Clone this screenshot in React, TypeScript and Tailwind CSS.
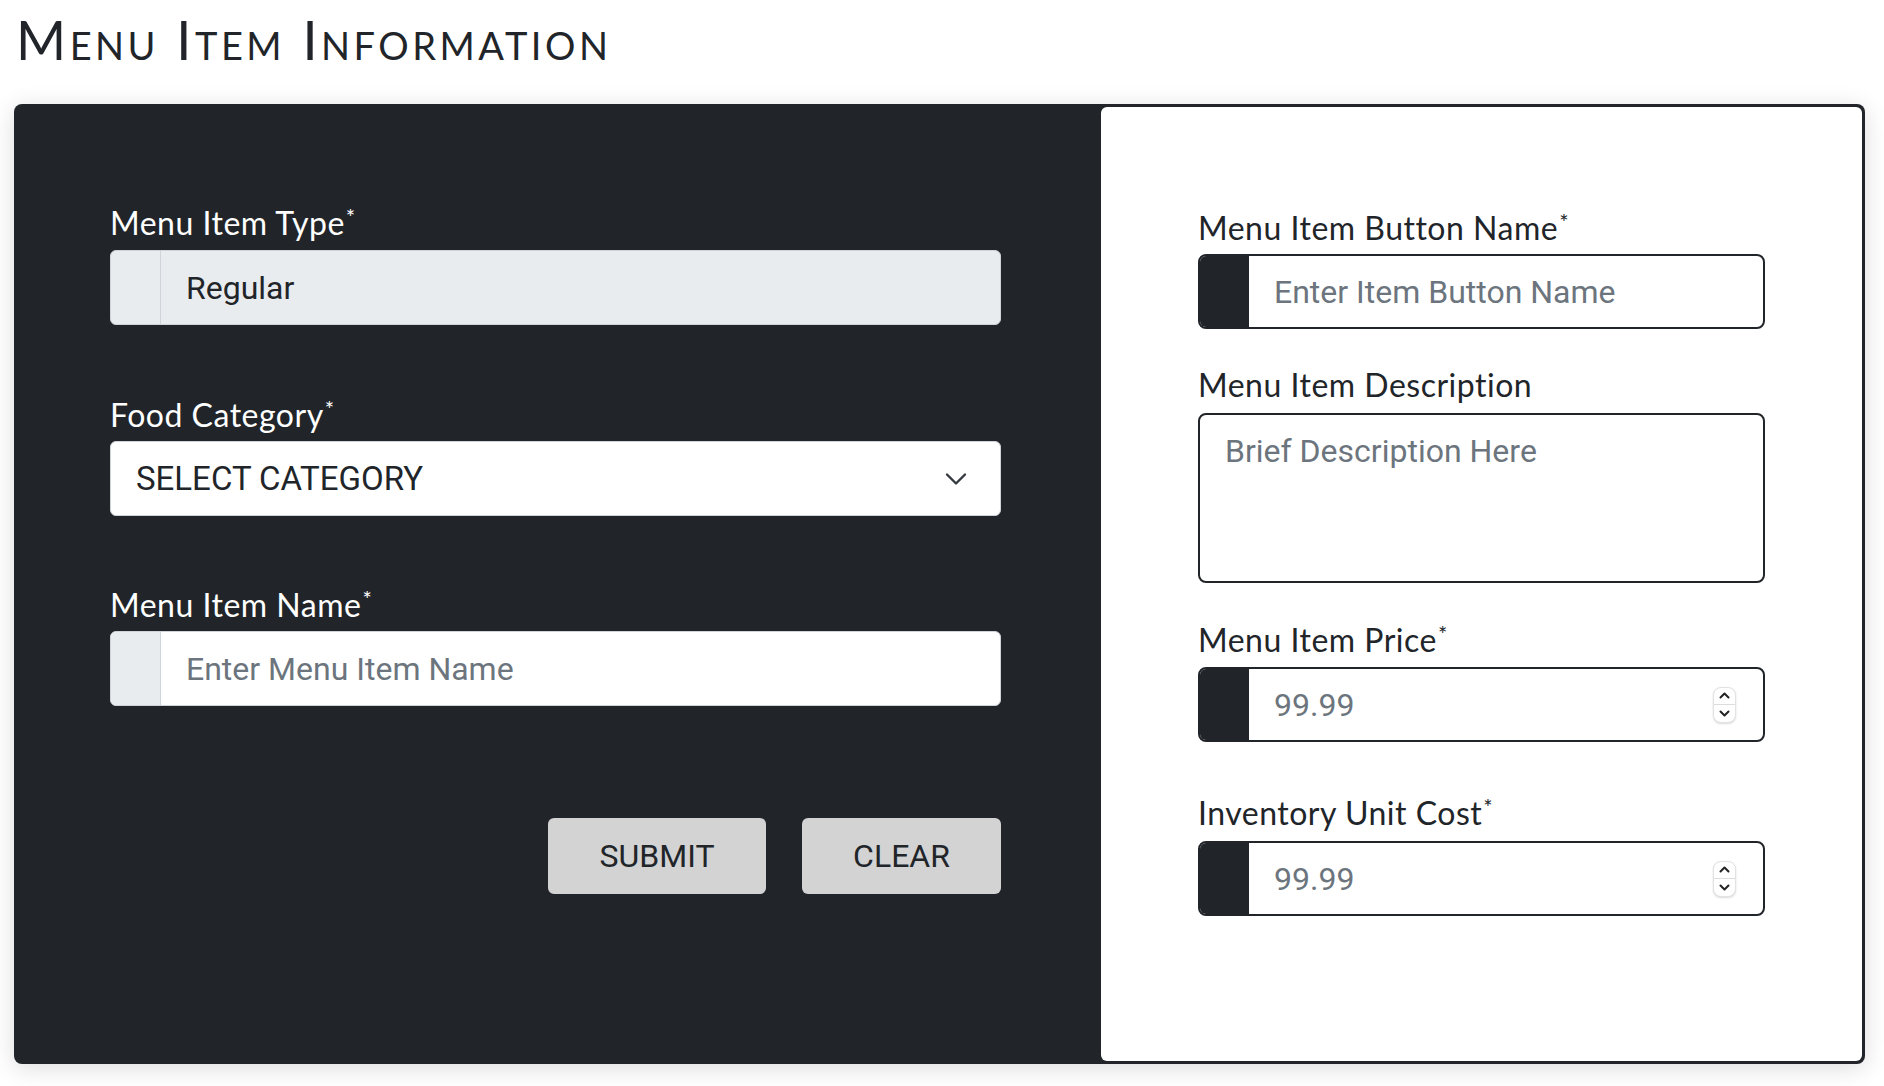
import { useState } from 'react';

const labelDark = "block text-[32px] leading-[36px] tracking-[0.5px] text-white font-['Lato',sans-serif]";
const labelLight = "block text-[32px] leading-[36px] tracking-[0.5px] text-[#212529] font-['Lato',sans-serif]";
const fieldText = "font-['Roboto',sans-serif] text-[32px] text-[#212529] placeholder:text-[#6c757d] outline-none bg-transparent";

function Req() {
  return <span className="align-top text-[22px] leading-[20px] relative top-[2px] ml-[1px]">*</span>;
}

function Spinner() {
  return (
    <div className="flex flex-col w-[23px] h-[36px] mr-[27px] rounded-[8px] border border-[#e2e2e2] bg-white shadow-[0_1px_2px_rgba(0,0,0,0.15)] overflow-hidden shrink-0">
      <div className="flex-1 flex items-center justify-center border-b border-[#dddddd]">
        <svg width="11" height="7" viewBox="0 0 11 7">
          <path d="M1.5 5.5 5.5 1.5 9.5 5.5" fill="none" stroke="#222" strokeWidth="2" strokeLinecap="round" strokeLinejoin="round" />
        </svg>
      </div>
      <div className="flex-1 flex items-center justify-center">
        <svg width="11" height="7" viewBox="0 0 11 7">
          <path d="M1.5 1.5 5.5 5.5 9.5 1.5" fill="none" stroke="#222" strokeWidth="2" strokeLinecap="round" strokeLinejoin="round" />
        </svg>
      </div>
    </div>
  );
}

function DarkGroup({ placeholder, number }: { placeholder: string; number?: boolean }) {
  return (
    <div className="flex items-center h-[75px] w-[567px] rounded-[8px] border-2 border-[#212529] overflow-hidden bg-white">
      <span className="self-stretch w-[49px] bg-[#212529] shrink-0" />
      <input className={`${fieldText} flex-1 min-w-0 h-full pl-[25px]`} placeholder={placeholder} />
      {number && <Spinner />}
    </div>
  );
}

export default function App() {
  const [category, setCategory] = useState('');

  return (
    <div className="min-h-screen bg-white pt-[8px]">
      <h1 className="pl-[16px] text-[54px] leading-[64px] text-[#212529] font-['Lato',sans-serif] [font-variant-caps:small-caps] tracking-[3.5px]">
        Menu Item Information
      </h1>

      <div className="mt-[32px] ml-[14px] w-[1851px] h-[960px] flex rounded-[8px] bg-[#212529] shadow-[0_4px_24px_rgba(0,0,0,0.14)]">
        {/* left side */}
        <div className="w-[1087px] shrink-0 pl-[96px] pt-[101px]">
          <label className={labelDark}>
            Menu Item Type<Req />
          </label>
          <div className="mt-[9px] flex h-[75px] w-[891px] rounded-[6px] border border-[#ced4da] overflow-hidden bg-[#e9ecef]">
            <span className="w-[50px] shrink-0 border-r border-[#ced4da]" />
            <input className={`${fieldText} flex-1 h-full pl-[25px]`} value="Regular" readOnly />
          </div>

          <label className={`${labelDark} mt-[72px]`}>
            Food Category<Req />
          </label>
          <div className="mt-[8px] flex items-center h-[75px] w-[891px] rounded-[6px] border border-[#ced4da] bg-white">
            <select
              value={category}
              onChange={(e) => setCategory(e.target.value)}
              className={`${fieldText} !text-[33px] appearance-none flex-1 h-full pl-[25px]`}
            >
              <option value="">SELECT CATEGORY</option>
            </select>
            <svg width="24" height="18" viewBox="0 0 16 12" className="mr-[32px] shrink-0">
              <path d="m2 3 6 6 6-6" fill="none" stroke="#343a40" strokeWidth="1.6" strokeLinecap="round" strokeLinejoin="round" />
            </svg>
          </div>

          <label className={`${labelDark} mt-[71px]`}>
            Menu Item Name<Req />
          </label>
          <div className="mt-[8px] flex h-[75px] w-[891px] rounded-[6px] border border-[#ced4da] overflow-hidden bg-white">
            <span className="w-[50px] shrink-0 bg-[#e9ecef] border-r border-[#ced4da]" />
            <input className={`${fieldText} flex-1 h-full pl-[25px]`} placeholder="Enter Menu Item Name" />
          </div>

          <div className="mt-[112px] w-[891px] flex justify-end gap-[36px]">
            <button className="w-[218px] h-[76px] rounded-[6px] bg-[#d3d3d3] text-[#212529] text-[32px] font-['Roboto',sans-serif]">
              SUBMIT
            </button>
            <button className="w-[199px] h-[76px] rounded-[6px] bg-[#d3d3d3] text-[#212529] text-[32px] font-['Roboto',sans-serif]">
              CLEAR
            </button>
          </div>
        </div>

        {/* right side */}
        <div className="flex-1 my-[3px] mr-[3px] rounded-[6px] bg-white pl-[97px] pt-[103px]">
          <label className={labelLight}>
            Menu Item Button Name<Req />
          </label>
          <div className="mt-[8px]">
            <DarkGroup placeholder="Enter Item Button Name" />
          </div>

          <label className={`${labelLight} mt-[38px]`}>Menu Item Description</label>
          <textarea
            className={`${fieldText} mt-[10px] block w-[567px] h-[170px] resize-none rounded-[8px] border-2 border-[#212529] px-[25px] pt-[17px] leading-[38px]`}
            placeholder="Brief Description Here"
          />

          <label className={`${labelLight} mt-[39px]`}>
            Menu Item Price<Req />
          </label>
          <div className="mt-[9px]">
            <DarkGroup placeholder="99.99" number />
          </div>

          <label className={`${labelLight} mt-[53px]`}>
            Inventory Unit Cost<Req />
          </label>
          <div className="mt-[10px]">
            <DarkGroup placeholder="99.99" number />
          </div>
        </div>
      </div>
    </div>
  );
}
